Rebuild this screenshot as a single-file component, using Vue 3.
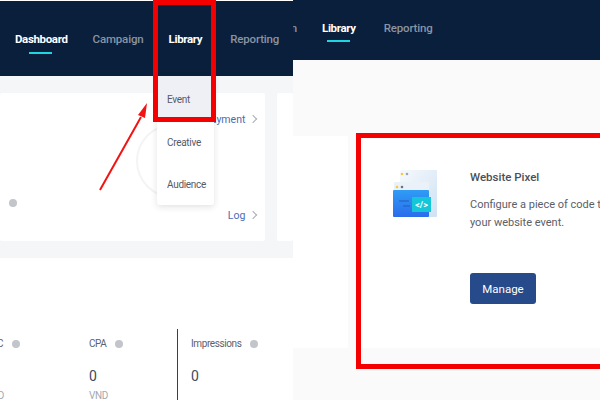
<script setup>
const leftNav = [
  { label: "Dashboard", active: true },
  { label: "Campaign" },
  { label: "Library", open: true },
  { label: "Reporting" },
];
const rightNav = [
  { label: "Campaign" },
  { label: "Library", active: true },
  { label: "Reporting" },
];
const menu = ["Event", "Creative", "Audience"];
</script>

<template>
  <div class="shot">
    <section class="panel left">
      <header class="bar left-bar">
        <span
          v-for="item in leftNav"
          :key="item.label"
          class="nav-item"
          :class="{ active: item.active, open: item.open }"
        >{{ item.label }}</span>
      </header>

      <div class="overview">
        <div class="card balance">
          <div class="links">
            <a class="link">Payment <i class="chev"></i></a>
            <a class="link">Log <i class="chev"></i></a>
          </div>
          <span class="dot balance-dot"></span>
          <span class="ring"></span>
        </div>
        <div class="card side"></div>
      </div>

      <div class="stats">
        <div class="stat cpc">
          <div class="stat-head">CPC <span class="dot"></span></div>
          <div class="stat-num">&nbsp;</div>
          <div class="stat-unit">VND</div>
        </div>
        <div class="stat cpa">
          <div class="stat-head">CPA <span class="dot"></span></div>
          <div class="stat-num">0</div>
          <div class="stat-unit">VND</div>
        </div>
        <div class="stat impressions">
          <div class="stat-head">Impressions <span class="dot"></span></div>
          <div class="stat-num">0</div>
        </div>
      </div>

      <!-- dropdown from the Library tab -->
      <ul class="menu">
        <li v-for="(m, i) in menu" :key="m" :class="{ current: i === 0 }">{{ m }}</li>
      </ul>

      <div class="red-box nav-box"></div>
      <svg class="arrow" width="60" height="100" viewBox="0 0 60 100">
        <path d="M3 87 L44 14" stroke="#f21313" stroke-width="2" fill="none" />
        <path d="M50 0 L41 12 L48 15 Z" fill="#f21313" />
      </svg>
    </section>

    <section class="panel right">
      <header class="bar right-bar">
        <span
          v-for="item in rightNav"
          :key="item.label"
          class="nav-item"
          :class="{ active: item.active }"
        >{{ item.label }}</span>
      </header>

      <div class="library">
        <div class="card blank"></div>
        <div class="card pixel">
          <svg class="pixel-icon" width="46" height="50" viewBox="0 0 46 50">
            <defs>
              <linearGradient id="back" x1="0" y1="0" x2="1" y2="1">
                <stop offset="0" stop-color="#f6f9fc" />
                <stop offset="1" stop-color="#cfe2f3" />
              </linearGradient>
              <linearGradient id="front" x1="0" y1="0" x2="0" y2="1">
                <stop offset="0" stop-color="#2f9cf5" />
                <stop offset="1" stop-color="#2a6cec" />
              </linearGradient>
            </defs>
            <rect x="7" y="0" width="37" height="47" rx="1" fill="url(#back)" />
            <rect x="1" y="12" width="35" height="9" fill="#eaf1f9" />
            <circle cx="9" cy="4" r="1.3" fill="#f5c842" />
            <circle cx="14" cy="4" r="1.3" fill="#9aa5b5" />
            <circle cx="4" cy="17" r="1.3" fill="#f5c842" />
            <circle cx="9" cy="17" r="1.3" fill="#66748a" />
            <rect x="0" y="20" width="36" height="27" rx="1" fill="url(#front)" />
            <path d="M6 31 H16 M10 36 H17" stroke="#1f5fb8" stroke-width="1" />
            <rect x="19" y="27" width="19" height="15" fill="#15c6d8" />
            <text x="28.5" y="38" class="code-glyph">&lt;/&gt;</text>
          </svg>
          <div class="pixel-body">
            <h3>Website Pixel</h3>
            <p>Configure a piece of code to track<br />your website event.</p>
            <button class="manage">Manage</button>
          </div>
        </div>
      </div>

      <div class="red-box pixel-box"></div>
    </section>
  </div>
</template>

<style scoped>
.shot {
  display: flex;
  width: 600px;
  height: 400px;
  overflow: hidden;
  font-family: Roboto, "Liberation Sans", sans-serif;
  color: #4a5260;
}

.panel {
  position: relative;
  overflow: hidden;
  height: 400px;
}
.left {
  width: 293px;
  background: #fff;
}
.right {
  flex: 1;
  background: #fafafa;
}

.bar {
  display: flex;
  align-items: flex-start;
  background: #0a1f3c;
  box-sizing: border-box;
}
.left-bar {
  height: 75px;
  margin-top: 1px;
  padding: 30px 0 0 15px;
  gap: 25px;
}
.right-bar {
  height: 60px;
  padding: 20px 0 0 0;
  gap: 25px;
  margin-left: -47px;
}

.nav-item {
  position: relative;
  font-size: 11.5px;
  font-weight: 500;
  letter-spacing: -0.15px;
  line-height: 16px;
  color: #8a94a3;
  white-space: nowrap;
}
.nav-item:last-child {
  margin-left: 3px;
}
.nav-item.active,
.nav-item.open {
  color: #fff;
  font-weight: 700;
  letter-spacing: -0.35px;
}
.nav-item.active::after {
  content: "";
  position: absolute;
  left: 50%;
  bottom: -7px;
  width: 23px;
  height: 2px;
  margin-left: -12px;
  background: #1fd6e0;
}
.right-bar .nav-item.active::after {
  bottom: -6px;
}

.overview {
  display: flex;
  gap: 12px;
  height: 182px;
  padding-top: 17px;
  box-sizing: border-box;
  background: #f5f6f8;
}
.card {
  background: #fff;
  border-radius: 2px;
}
.balance {
  position: relative;
  width: 265px;
  height: 148px;
}
.side {
  flex: 1;
  height: 148px;
}
.links {
  display: flex;
  flex-direction: column;
  align-items: flex-end;
  justify-content: space-between;
  height: 112px;
  padding: 19px 9px 0 0;
}
.link {
  font-size: 10.5px;
  line-height: 16px;
  color: #4a6cb5;
}
.chev {
  display: inline-block;
  width: 5px;
  height: 5px;
  margin: 0 0 1px 2px;
  border-top: 1px solid #a9b0bb;
  border-right: 1px solid #a9b0bb;
  transform: rotate(45deg);
}
.balance-dot {
  position: absolute;
  left: 9px;
  top: 106px;
}
.ring {
  position: absolute;
  left: 136px;
  top: 31px;
  width: 70px;
  height: 70px;
  border: 2px solid #f4f4f5;
  border-radius: 50%;
}

.dot {
  display: inline-block;
  width: 8px;
  height: 8px;
  border-radius: 50%;
  background: #c2c5c9;
}

.stats {
  display: grid;
  grid-template-columns: 89px 88px 116px;
  padding-top: 71px;
}
.stat {
  height: 71px;
  padding-top: 7px;
  box-sizing: border-box;
  font-size: 10px;
  letter-spacing: -0.4px;
}
.stat-head {
  display: flex;
  align-items: center;
  gap: 9px;
  line-height: 16px;
  color: #5a6270;
}
.stat-num {
  margin-top: 15px;
  font-size: 14px;
  line-height: 18px;
  letter-spacing: 0;
  color: #3c4a5e;
}
.stat-unit {
  margin-top: 4px;
  line-height: 14px;
  color: #a3a8b0;
}
.cpc {
  margin-left: -15px;
}
.impressions {
  padding-left: 13px;
  border-left: 1px solid #26407c;
}

.menu {
  position: absolute;
  left: 157px;
  top: 76px;
  width: 57px;
  height: 129px;
  margin: 0;
  padding: 0;
  list-style: none;
  background: #fff;
  box-shadow: 0 2px 6px rgba(40, 50, 70, 0.14);
  border-radius: 0 0 3px 3px;
}
.menu li {
  height: 42.5px;
  padding-left: 10px;
  font-size: 10px;
  letter-spacing: -0.3px;
  line-height: 47px;
  color: #555b66;
}
.menu .current {
  background: #eef0f6;
}

.red-box {
  position: absolute;
  box-sizing: border-box;
  border: 5px solid #f40000;
  pointer-events: none;
}
.nav-box {
  left: 153px;
  top: 0;
  width: 63px;
  height: 122px;
}
.pixel-box {
  left: 63px;
  top: 133px;
  width: 260px;
  height: 236px;
}
.arrow {
  position: absolute;
  left: 97px;
  top: 103px;
}

.library {
  display: flex;
  gap: 12px;
  margin-top: 76px;
  height: 212px;
}
.blank {
  width: 55px;
}
.pixel {
  display: flex;
  flex: 1;
  gap: 31px;
  padding: 34px 0 0 33px;
  min-width: 0;
}
.pixel-icon {
  flex: none;
}
.code-glyph {
  font: 700 9px Roboto, sans-serif;
  fill: #fff;
  text-anchor: middle;
}
.pixel-body {
  white-space: nowrap;
}
.pixel-body h3 {
  margin: 0;
  font-size: 11.5px;
  font-weight: 500;
  line-height: 14px;
  color: #4a4f58;
}
.pixel-body p {
  margin: 12px 0 0;
  font-size: 11px;
  line-height: 18px;
  color: #5a6068;
}
.manage {
  display: block;
  width: 66px;
  height: 31px;
  margin-top: 41px;
  padding: 0;
  border: 0;
  border-radius: 3px;
  background: #264a8a;
  color: #fff;
  font: 11.5px Roboto, sans-serif;
}
</style>
